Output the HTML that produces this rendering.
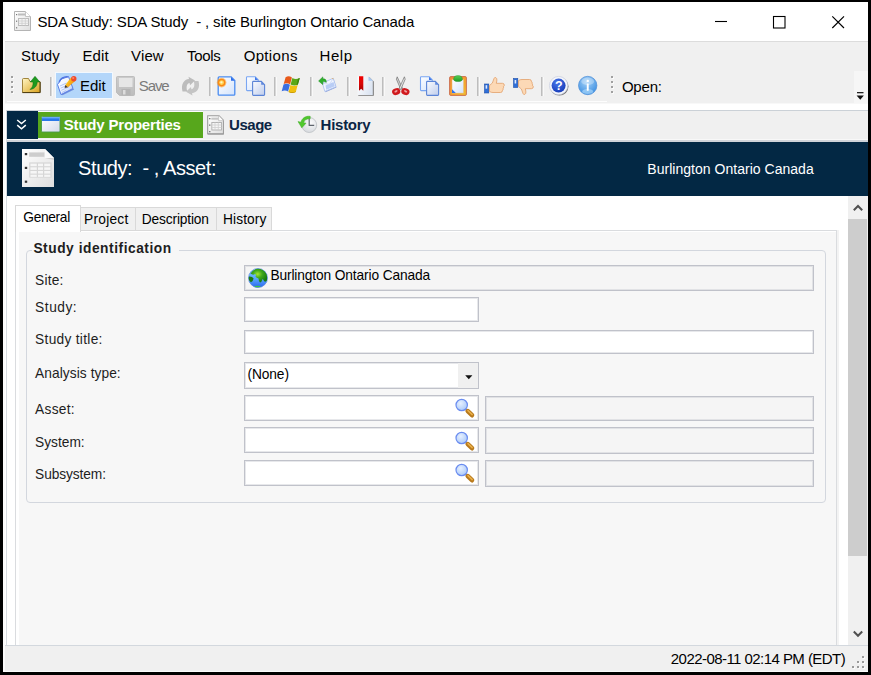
<!DOCTYPE html>
<html lang="en"><head><meta charset="utf-8"><title>SDA Study</title>
<style>
html,body{margin:0;padding:0;}
body{width:871px;height:675px;background:#000;overflow:hidden;position:relative;font-family:"Liberation Sans",sans-serif;}
#root{position:absolute;left:0;top:0;width:871px;height:675px;overflow:hidden;}
.b{position:absolute;box-sizing:border-box;}
.t{position:absolute;white-space:pre;height:20px;line-height:20px;font-family:"Liberation Sans",sans-serif;}
svg{position:absolute;overflow:visible;}
.inp{position:absolute;box-sizing:border-box;border:1px solid #c0c2ca;background:#fff;box-shadow:inset 0 0 0 1px rgba(192,194,202,0.38);}
.dis{background:#f5f5f5;}
.sep{position:absolute;width:2px;background:linear-gradient(90deg,#bdbdbd 0,#bdbdbd 50%,#d8d8d8 50%,#d8d8d8 100%);top:77px;height:19px;box-shadow:1px 0 0 #f9f9f9;}

.gd{position:absolute;width:2px;height:2px;background:#a0a0a0;box-shadow:1px 1px 0 #fbfbfb;}
</style></head><body><div id="root">
<!-- window -->
<div class="b" style="left:3px;top:2px;width:865px;height:670px;background:#fff;"></div>
<!-- title bar bottom line -->
<div class="b" style="left:3px;top:41px;width:865px;height:1px;background:#dcdcdc;"></div>
<!-- menu + toolbar -->
<div class="b" style="left:3px;top:42px;width:865px;height:61px;background:#f0f0f0;"></div>
<div class="b" style="left:3px;top:103px;width:865px;height:1px;background:#f8f8f8;"></div>
<div class="b" style="left:7px;top:101px;width:600px;height:1px;background:#fdfdfd;"></div>
<div class="b" style="left:854px;top:71px;width:14px;height:32px;background:#f6f6f6;"></div>
<!-- container lines -->
<div class="b" style="left:6px;top:110px;width:862px;height:1px;background:#cbd1d7;"></div>
<div class="b" style="left:6px;top:110px;width:1px;height:535px;background:#d7dbe0;"></div>
<!-- strip -->
<div class="b" style="left:7px;top:111px;width:861px;height:28px;background:#f0f0f0;"></div>
<div class="b" style="left:7px;top:139px;width:861px;height:1px;background:#f8f8f8;"></div>
<div class="b" style="left:7px;top:140px;width:861px;height:2px;background:#d0d4d9;"></div>
<div class="b" style="left:38px;top:111px;width:165px;height:1px;background:#fcfcfc;"></div>
<div class="b" style="left:7px;top:111px;width:31px;height:28px;background:#032844;"></div>
<div class="b" style="left:38px;top:112px;width:165px;height:26px;background:#57a71c;"></div>
<!-- header -->
<div class="b" style="left:7px;top:142px;width:861px;height:54px;background:#032844;"></div>
<!-- scrollbar -->
<div class="b" style="left:848px;top:196px;width:20px;height:449px;background:#f0f0f0;"></div>
<div class="b" style="left:848px;top:219px;width:19px;height:337px;background:#cdcdcd;"></div>
<!-- tab control -->
<div class="b" style="left:15px;top:230px;width:822px;height:420px;border:1px solid #dadcdf;background:#fff;"></div>
<div class="b" style="left:837px;top:230px;width:2px;height:415px;background:#f3f3f3;"></div>
<div class="b" style="left:19px;top:232px;width:817px;height:413px;background:#f7f7f7;"></div>
<div class="b" style="left:80px;top:207px;width:192px;height:24px;border:1px solid #d9d9d9;background:#f0f0f0;"></div>
<div class="b" style="left:135px;top:208px;width:1px;height:22px;background:#d9d9d9;"></div>
<div class="b" style="left:216px;top:208px;width:1px;height:22px;background:#d9d9d9;"></div>
<div class="b" style="left:15px;top:205px;width:66px;height:27px;border:1px solid #d9d9d9;border-bottom:none;background:#fff;"></div>
<!-- group box -->
<div class="b" style="left:26px;top:250px;width:800px;height:253px;border:1px solid #d3d7de;border-radius:4px;"></div>
<div class="b" style="left:32px;top:249px;width:147px;height:3px;background:#f7f7f7;"></div>
<!-- inputs -->
<div class="inp dis" style="left:244px;top:265px;width:570px;height:26px;"></div>
<div class="inp" style="left:244px;top:297px;width:235px;height:25px;"></div>
<div class="inp" style="left:244px;top:330px;width:570px;height:24px;"></div>
<div class="inp" style="left:244px;top:362px;width:235px;height:27px;"></div>
<div class="b" style="left:458px;top:363px;width:20px;height:25px;background:#f0f0f0;"></div>
<div class="inp" style="left:244px;top:395px;width:235px;height:26px;"></div>
<div class="inp dis" style="left:485px;top:396px;width:329px;height:25px;"></div>
<div class="inp" style="left:244px;top:427px;width:235px;height:26px;"></div>
<div class="inp dis" style="left:485px;top:427px;width:329px;height:27px;"></div>
<div class="inp" style="left:244px;top:460px;width:235px;height:26px;"></div>
<div class="inp dis" style="left:485px;top:460px;width:329px;height:27px;"></div>
<!-- status bar -->
<div class="b" style="left:3px;top:645px;width:865px;height:1px;background:#d3d8de;"></div>
<div class="b" style="left:3px;top:646px;width:865px;height:26px;background:#f0f0f0;"></div>
<!-- inner window border -->
<div class="b" style="left:3px;top:2px;width:2px;height:670px;background:#fbfbfb;"></div>
<div class="b" style="left:3px;top:671px;width:865px;height:1px;background:#fbfbfb;"></div>

<!-- ===== icons ===== -->
<svg width="0" height="0" style="left:0;top:0"><defs>
<linearGradient id="gPage" x1="0" y1="0" x2="1" y2="1"><stop offset="0" stop-color="#ffffff"/><stop offset="1" stop-color="#dedede"/></linearGradient>
<linearGradient id="gFold" x1="0" y1="0" x2="1" y2="1"><stop offset="0" stop-color="#fff6c4"/><stop offset="1" stop-color="#d9a11c"/></linearGradient>
<linearGradient id="gBlueDoc" x1="0" y1="0" x2="1" y2="1"><stop offset="0" stop-color="#ffffff"/><stop offset="1" stop-color="#dfe9fb"/></linearGradient>
<radialGradient id="gLens" cx="0.4" cy="0.35" r="0.7"><stop offset="0" stop-color="#e6f0ff"/><stop offset="1" stop-color="#a9c8f8"/></radialGradient>
<radialGradient id="gHelp" cx="0.4" cy="0.3" r="0.8"><stop offset="0" stop-color="#4a78ea"/><stop offset="1" stop-color="#1236b4"/></radialGradient>
<radialGradient id="gInfo" cx="0.45" cy="0.3" r="0.8"><stop offset="0" stop-color="#a5d2f8"/><stop offset="1" stop-color="#2f86de"/></radialGradient>
<radialGradient id="gGlobe" cx="0.4" cy="0.35" r="0.75"><stop offset="0" stop-color="#62adf3"/><stop offset="1" stop-color="#0f4db8"/></radialGradient>
<linearGradient id="gWin" x1="0" y1="0" x2="1" y2="1"><stop offset="0" stop-color="#ffffff"/><stop offset="1" stop-color="#d5d9ea"/></linearGradient>
<linearGradient id="gDisk" x1="0" y1="0" x2="0" y2="1"><stop offset="0" stop-color="#cccccc"/><stop offset="1" stop-color="#bdbdbd"/></linearGradient>
<linearGradient id="gBlueDoc2" x1="0" y1="0" x2="1" y2="1"><stop offset="0" stop-color="#ffffff"/><stop offset="1" stop-color="#d3e3fc"/></linearGradient>
<linearGradient id="gBlueDoc3" x1="0" y1="0" x2="1" y2="1"><stop offset="0" stop-color="#fafbfe"/><stop offset="1" stop-color="#bfcdec"/></linearGradient>
<linearGradient id="gNote" x1="0" y1="0" x2="1" y2="1"><stop offset="0" stop-color="#ffffff"/><stop offset="0.55" stop-color="#eef3fe"/><stop offset="1" stop-color="#9db6f2"/></linearGradient>
<linearGradient id="gPencil" x1="0" y1="0" x2="1" y2="0.6"><stop offset="0" stop-color="#ffe02a"/><stop offset="1" stop-color="#f28c10"/></linearGradient>
<radialGradient id="gClock" cx="0.6" cy="0.35" r="0.8"><stop offset="0" stop-color="#fbfbfc"/><stop offset="1" stop-color="#cfd3d8"/></radialGradient>
<linearGradient id="gBk" x1="0" y1="0" x2="1" y2="0.4"><stop offset="0" stop-color="#ffffff"/><stop offset="1" stop-color="#dde5f2"/></linearGradient>
<linearGradient id="gRib" x1="0" y1="0" x2="0" y2="1"><stop offset="0" stop-color="#f00000"/><stop offset="0.5" stop-color="#d80808"/><stop offset="1" stop-color="#a80000"/></linearGradient>
<linearGradient id="gClip" x1="0" y1="0" x2="1" y2="1"><stop offset="0" stop-color="#f08a3a"/><stop offset="0.5" stop-color="#f5a030"/><stop offset="1" stop-color="#f0c030"/></linearGradient>
<linearGradient id="gGreen" x1="0" y1="0" x2="0" y2="1"><stop offset="0" stop-color="#58d058"/><stop offset="1" stop-color="#1f9a22"/></linearGradient>
<linearGradient id="gOcean" x1="0" y1="0" x2="0" y2="1"><stop offset="0" stop-color="#7cc4ff"/><stop offset="0.55" stop-color="#58a6fb"/><stop offset="1" stop-color="#2a66f0"/></linearGradient>
<radialGradient id="gLand" cx="0.42" cy="0.4" r="0.6"><stop offset="0" stop-color="#a4e630"/><stop offset="0.45" stop-color="#3fa81c"/><stop offset="1" stop-color="#157a10"/></radialGradient>
</defs></svg>

<!-- title icon -->
<svg style="left:14px;top:11px" width="17" height="20" viewBox="0 0 17 20">
<path d="M0.5,0.5H11.5L16.5,5.5V19.5H0.5Z" fill="url(#gPage)" stroke="#b4b4b4"/>
<path d="M11.5,0.5V5.5H16.5" fill="#fff" stroke="#c4c4c4"/>
<rect x="4" y="2.5" width="7" height="2" fill="#bdbdbd"/>
<rect x="4.5" y="7.5" width="10" height="7" fill="#f4f4f4" stroke="#bcbcbc"/>
<path d="M8,7.5V14.5M11.3,7.5V14.5M4.5,10H14.5M4.5,12.3H14.5" stroke="#cdcdcd" stroke-width="0.8" fill="none"/>
<rect x="2" y="3" width="1.2" height="1.2" fill="#777"/><rect x="2" y="9.6" width="1.2" height="1.2" fill="#777"/><rect x="2" y="16.2" width="1.2" height="1.2" fill="#777"/>
</svg>

<!-- window controls -->
<svg style="left:715px;top:14px" width="132" height="16" viewBox="715 14 132 16">
<path d="M715,21.5H727" stroke="#000" stroke-width="1.1"/>
<rect x="773.5" y="16.5" width="11.5" height="11.5" fill="none" stroke="#000" stroke-width="1.1"/>
<path d="M832.3,16.3L844,28M844,16.3L832.3,28" stroke="#000" stroke-width="1.15"/>
</svg>

<!-- toolbar grips -->
<div class="gd" style="left:11px;top:76px"></div><div class="gd" style="left:11px;top:81px"></div><div class="gd" style="left:11px;top:86px"></div><div class="gd" style="left:11px;top:91px"></div>
<div class="gd" style="left:611px;top:76px"></div><div class="gd" style="left:611px;top:81px"></div><div class="gd" style="left:611px;top:86px"></div><div class="gd" style="left:611px;top:91px"></div>

<!-- separators -->
<div class="sep" style="left:50px"></div><div class="sep" style="left:209px"></div><div class="sep" style="left:274px"></div><div class="sep" style="left:310px"></div><div class="sep" style="left:347px"></div><div class="sep" style="left:382px"></div><div class="sep" style="left:477px"></div><div class="sep" style="left:541px"></div>

<!-- edit button highlight -->
<div class="b" style="left:55px;top:72px;width:58px;height:27px;background:#b3d6fa;border:1px solid #f2f8fe;"></div>

<!-- folder up -->
<svg style="left:22px;top:76px" width="19" height="18" viewBox="0 0 19 18">
<path d="M0.5,3.5Q0.5,2.5 1.5,2.5H6.5L8,5.5H18V16.5H0.5Z" fill="url(#gFold)" stroke="#8a6a18" stroke-width="0.8"/>
<path d="M0.5,16.6H18.2V6" stroke="#4a3a10" stroke-width="1" fill="none"/>
<path d="M13,0.3L17.8,6H15.2C15.2,10 12.5,13 8,13.5C10.5,11.5 11.3,9 11,6H8.3Z" fill="#1e9a1e" stroke="#0d6e12" stroke-width="0.5"/>
</svg>

<!-- edit (notepad+pencil) -->
<svg style="left:56px;top:75px" width="21" height="21" viewBox="0 0 21 21">
<path d="M6.5,20.3L18.2,14.6L17,13.5L5,19Z" fill="#6f8fdc"/>
<path d="M1.5,9.5L5.5,4L12.5,1.6L17,13.5L5,19.6Z" fill="url(#gNote)" stroke="#5a7ee6" stroke-width="1"/>
<path d="M3.2,7.2Q4.3,3.4 8.3,2.2Q10.5,1.3 12.3,2" stroke="#4f74e2" stroke-width="1.3" fill="none"/>
<path d="M4,11L10.5,8M4.6,13.2L12,9.8M5.2,15.4L13.2,11.7M5.8,17.5L10,15.6" stroke="#a9c0f4" stroke-width="0.9"/>
<path d="M9.3,10L15,2.6L19.2,5.9L12,12.3Z" fill="url(#gPencil)"/>
<circle cx="17.8" cy="3.7" r="2.7" fill="#f04a2c"/><circle cx="17.2" cy="3" r="1.1" fill="#f98a6a"/>
<path d="M9.3,10L12,12.3L8.6,12.9Z" fill="#4a3a2a"/>
</svg>

<!-- save (disabled) -->
<svg style="left:116px;top:76px" width="19" height="20" viewBox="0 0 19 20">
<path d="M0.5,1.5Q0.5,0.5 1.5,0.5H17.5Q18.5,0.5 18.5,1.5V18.5Q18.5,19.5 17.5,19.5H3.5L0.5,16.5Z" fill="url(#gDisk)" stroke="#b5b5b5" stroke-width="0.8"/>
<rect x="3" y="2" width="13.5" height="9" fill="#e6e6e6"/>
<rect x="5.5" y="13" width="9" height="6.5" fill="#b4b4b4"/>
<rect x="7" y="14" width="2.5" height="4.5" fill="#dcdcdc"/>
</svg>

<!-- refresh (disabled) -->
<svg style="left:181px;top:76px" width="19" height="20" viewBox="0 0 19 20">
<path d="M1.5,15.5C-0.5,8 3,3.5 8,3L7.5,0.8L14,4.5L9,9.3L8.6,7C6,7.5 4.8,10.5 6.3,15.5Z" fill="#bcbcbc"/>
<path d="M17.5,5C19.5,12 16,16.5 11,17.2L11.5,19.4L5,15.7L10,10.9L10.4,13.2C13,12.7 14.2,9.7 12.7,5Z" fill="#c4c4c4"/>
</svg>

<!-- new doc -->
<svg style="left:217px;top:76px" width="19" height="20" viewBox="0 0 19 20">
<path d="M2.2,0.9H14.2L17.8,4.5V18.2Q17.8,19.2 16.8,19.2H2.2Q1.2,19.2 1.2,18.2V1.9Q1.2,0.9 2.2,0.9Z" fill="url(#gBlueDoc2)" stroke="#4a8cf0" stroke-width="1.3"/>
<path d="M14,1V4.7H17.7Z" fill="#2f6ee8"/>
<circle cx="4.6" cy="6.6" r="4.8" fill="#ff9a1e" opacity="0.55"/><circle cx="4.6" cy="6.6" r="3.8" fill="#fb8a14"/><circle cx="4.6" cy="6.6" r="2.4" fill="#ffd75a"/><circle cx="4.4" cy="6.3" r="1.1" fill="#fff6cc"/>
</svg>

<!-- copy 1 -->
<svg style="left:246px;top:76px" width="20" height="20" viewBox="0 0 20 20">
<path d="M1.2,0.7H9.2L12.2,3.7V14.6H1.2Q0.5,14.6 0.5,13.8V1.5Q0.5,0.7 1.2,0.7Z" fill="url(#gBlueDoc2)" stroke="#7aa6f2" stroke-width="1.1"/>
<path d="M9,0.8V3.9H12.1Z" fill="#3f78e8"/>
<path d="M7.4,5.4H15.3L18.6,8.7V18.6Q18.6,19.4 17.8,19.4H7.4Q6.6,19.4 6.6,18.6V6.2Q6.6,5.4 7.4,5.4Z" fill="url(#gBlueDoc3)" stroke="#5b84d6" stroke-width="1.1"/>
<path d="M15.2,5.6V8.8H18.5Z" fill="#5c86dc"/>
</svg>

<!-- windows flag -->
<svg style="left:282px;top:76px" width="19" height="18" viewBox="0 0 19 18">
<path d="M3.6,1.3Q6.6,-0.8 9.9,1.6L8.1,8.3Q5,6.2 1.7,8.1Z" fill="#e8591a"/>
<path d="M10.4,1.9Q13.6,4 17.8,1.9L15.9,8.6Q12.4,10.6 8.6,8.5Z" fill="#5aa818"/>
<path d="M15.9,2.7L17.8,1.9L15.9,8.6L14.6,9.2Z" fill="#3d8510"/>
<path d="M1.5,8.6Q4.7,6.7 7.9,8.8L6.1,15.6Q3,13.5 -0.3,15.3Z" fill="#3a6fe0"/>
<path d="M8.4,9.1Q11.9,11 15.7,9.1L13.8,16Q10.2,18 6.6,16Z" fill="#f0c010"/>
<path d="M6.6,16Q10.2,18 13.8,16L14,15.2Q10.3,17 6.8,15.2Z" fill="#c99a08"/>
</svg>

<!-- envelope w/ green arrow -->
<svg style="left:318px;top:76px" width="20" height="18" viewBox="0 0 20 18">
<path d="M5.2,8.2L15.6,2.9L18.4,11.6L7.4,16.3Z" fill="#8d9fd6"/>
<path d="M4.4,7.2L15.2,2.2L18,10.8L6.8,15.4Z" fill="#f2f6fe" stroke="#a9c0f0" stroke-width="0.8"/>
<path d="M7.5,9.5L15.5,6L16.8,10.3L8.3,13.7Z" fill="#b9cdf5"/>
<path d="M4.4,7.2L11.6,8.4L15.2,2.2" fill="none" stroke="#c7d6f6" stroke-width="0.8"/>
<path d="M13.5,2.6L15.2,2.2L15.5,3.3Z" fill="#f0a030"/>
<path d="M0.6,5L4.8,0.9V2.9C7.4,2.6 8.6,4 8.2,6.6C7.3,5.5 6.2,5.3 4.8,5.8V8.6Z" fill="#2fb02c" stroke="#178a1c" stroke-width="0.5"/>
</svg>

<!-- bookmark page -->
<svg style="left:357px;top:76px" width="17" height="20" viewBox="0 0 17 20">
<path d="M1.3,1H12.4L16.8,5.4V19.8H1.3Z" fill="#555" opacity="0.8"/>
<path d="M0.6,0.5H11.5L15.8,4.8V19H0.6Z" fill="url(#gBk)"/>
<path d="M11.5,0.5V4.8H15.8Z" fill="#a9c8f0"/>
<path d="M2,0.3H6.3V14.8L4.15,12.7L2,14.8Z" fill="url(#gRib)"/>
</svg>

<!-- scissors -->
<svg style="left:391px;top:76px" width="19" height="20" viewBox="0 0 19 20">
<path d="M6.2,0.8L11.6,12.6L9.8,13.4L5.4,3.2Z" fill="#d2d2d2" stroke="#707070" stroke-width="0.7"/>
<path d="M13.4,0.8L8,12.6L9.8,13.4L14.2,3.2Z" fill="#e6e6e6" stroke="#707070" stroke-width="0.7"/>
<ellipse cx="5.2" cy="15.6" rx="4.2" ry="3.3" fill="#d01a1e" transform="rotate(-20 5.2 15.6)"/>
<ellipse cx="14.4" cy="15.6" rx="4.2" ry="3.3" fill="#d01a1e" transform="rotate(20 14.4 15.6)"/>
<ellipse cx="5" cy="15.3" rx="1.7" ry="1" fill="#f0a0a0" transform="rotate(-25 5 15.3)"/>
<ellipse cx="14.6" cy="15.3" rx="1.7" ry="1" fill="#f0a0a0" transform="rotate(25 14.6 15.3)"/>
</svg>

<!-- copy 2 -->
<svg style="left:419.6px;top:76px" width="20" height="20" viewBox="0 0 20 20">
<path d="M1.2,0.7H9.2L12.2,3.7V14.6H1.2Q0.5,14.6 0.5,13.8V1.5Q0.5,0.7 1.2,0.7Z" fill="url(#gBlueDoc2)" stroke="#7aa6f2" stroke-width="1.1"/>
<path d="M9,0.8V3.9H12.1Z" fill="#3f78e8"/>
<path d="M7.4,5.4H15.3L18.6,8.7V18.6Q18.6,19.4 17.8,19.4H7.4Q6.6,19.4 6.6,18.6V6.2Q6.6,5.4 7.4,5.4Z" fill="url(#gBlueDoc3)" stroke="#5b84d6" stroke-width="1.1"/>
<path d="M15.2,5.6V8.8H18.5Z" fill="#5c86dc"/>
</svg>

<!-- paste -->
<svg style="left:449px;top:75px" width="18" height="21" viewBox="0 0 18 21">
<rect x="0.6" y="1.6" width="16.8" height="18.8" rx="1.2" fill="url(#gClip)" stroke="#c8684a" stroke-width="0.9"/>
<rect x="3" y="4.5" width="11.6" height="13.6" fill="url(#gBlueDoc2)" stroke="#e8b868" stroke-width="0.5"/>
<path d="M3,14.2L6.8,18.1H3Z" fill="#2f74ee"/>
<path d="M4.6,4.6Q4.4,0.6 9,0.6Q13.6,0.6 13.4,4.6Q13.2,6.6 9,6.6Q4.8,6.6 4.6,4.6Z" fill="url(#gGreen)" stroke="#1f8a22" stroke-width="0.4"/>
</svg>

<!-- thumb up -->
<svg style="left:484px;top:77px" width="21" height="17" viewBox="0 0 21 17">
<rect x="0.5" y="7" width="4.3" height="9" fill="#2f6fd8" stroke="#1f4fa8" stroke-width="0.6"/>
<rect x="1.6" y="8.2" width="1.6" height="3.5" fill="#dfeaff"/>
<path d="M5.5,8.5Q9,7 10,1.5Q10.3,0.3 11.8,0.6Q13.3,1.2 12.8,4L12.3,6.3H18.5Q20.5,6.5 20.3,8.3Q20.3,9.3 19.3,9.7Q20,10.8 19,11.8Q19.5,13 18.3,13.8Q18.5,15.5 16.5,15.5H9Q7,15.5 5.5,14.5Z" fill="#fcd9b6" stroke="#e2a06a" stroke-width="0.8"/>
</svg>

<!-- thumb down -->
<svg style="left:513px;top:78px" width="21" height="17" viewBox="0 0 21 17">
<g transform="translate(0,17) scale(1,-1)">
<rect x="0.5" y="7.5" width="4.3" height="9" fill="#2f6fd8" stroke="#1f4fa8" stroke-width="0.6"/>
<rect x="1.6" y="11.5" width="1.6" height="3.5" fill="#dfeaff"/>
<path d="M5.5,8.5Q9,7 10,1.5Q10.3,0.3 11.8,0.6Q13.3,1.2 12.8,4L12.3,6.3H18.5Q20.5,6.5 20.3,8.3Q20.3,9.3 19.3,9.7Q20,10.8 19,11.8Q19.5,13 18.3,13.8Q18.5,15.5 16.5,15.5H9Q7,15.5 5.5,14.5Z" fill="#fcd9b6" stroke="#e2a06a" stroke-width="0.8"/>
</g>
</svg>

<!-- help -->
<svg style="left:549px;top:76px" width="20" height="20" viewBox="0 0 20 20">
<circle cx="10.3" cy="10.4" r="9.2" fill="#4a4a4a" opacity="0.75"/>
<circle cx="9.6" cy="9.6" r="9.2" fill="#f3f5fb" stroke="#c9cee0" stroke-width="0.7"/>
<circle cx="9.6" cy="9.6" r="7" fill="url(#gHelp)"/>
<text x="9.7" y="14" font-family="Liberation Sans, sans-serif" font-size="12.5" font-weight="700" fill="#fff" text-anchor="middle">?</text>
</svg>

<!-- info -->
<svg style="left:578px;top:76px" width="20" height="20" viewBox="0 0 20 20">
<circle cx="9.7" cy="9.5" r="9.2" fill="url(#gInfo)" stroke="#4f8fd8" stroke-width="0.7"/>
<ellipse cx="9.7" cy="5.4" rx="6.4" ry="3.8" fill="#ffffff" opacity="0.3"/>
<ellipse cx="9.7" cy="15.5" rx="5.5" ry="2.5" fill="#bfe6ff" opacity="0.55"/>
<rect x="8.8" y="7.4" width="1.9" height="7.4" rx="0.6" fill="#fff"/><circle cx="9.75" cy="4.9" r="1.2" fill="#fff"/>
</svg>

<!-- overflow arrow -->
<svg style="left:856px;top:91px" width="9" height="10" viewBox="0 0 9 10">
<rect x="1" y="1" width="6.5" height="1.3" fill="#222"/>
<path d="M0.6,4.5H7.9L4.25,8.8Z" fill="#111"/>
</svg>

<!-- chevrons in strip -->
<svg style="left:16px;top:119px" width="11" height="12" viewBox="0 0 11 12">
<path d="M1.2,1L5.5,4.6L9.8,1M1.2,6.2L5.5,9.8L9.8,6.2" fill="none" stroke="#fff" stroke-width="1.5"/>
</svg>

<!-- strip: window icon -->
<svg style="left:41px;top:116px" width="20" height="17" viewBox="0 0 20 17">
<rect x="0.5" y="0.5" width="18.5" height="15.5" rx="1" fill="url(#gWin)" stroke="#4a9a4a" stroke-width="0.9"/>
<rect x="1" y="1" width="17.5" height="4" fill="#2a78ea"/>
<rect x="1" y="1" width="17.5" height="1.4" fill="#6aaaf7"/>
</svg>

<!-- strip: usage icon -->
<svg style="left:207px;top:115px" width="17.4" height="20" viewBox="0 0 18 20" preserveAspectRatio="none">
<path d="M0.7,0.7H12.5L17,5.2V18.8H0.7Z" fill="url(#gPage)" stroke="#9a9a9a" stroke-width="1.1"/>
<path d="M12,0.7V5.7H17" fill="#fdfdfd" stroke="#bdbdbd" stroke-width="0.8"/>
<rect x="4.5" y="2.7" width="7" height="2" fill="#c6c6c6"/>
<rect x="5" y="7.5" width="10" height="7.5" fill="#f6f6f6" stroke="#adadad" stroke-width="0.9"/>
<path d="M8.3,7.5V15M11.7,7.5V15M5,10H15M5,12.5H15" stroke="#cfcfcf" stroke-width="0.8" fill="none"/>
<rect x="2.2" y="3" width="1.3" height="1.3" fill="#666"/><rect x="2.2" y="9.5" width="1.3" height="1.3" fill="#666"/><rect x="2.2" y="16" width="1.3" height="1.3" fill="#666"/>
<path d="M0.7,19.2H17.3" stroke="#9a9a9a" stroke-width="1"/>
</svg>

<!-- strip: history clock -->
<svg style="left:297px;top:115px" width="21" height="20" viewBox="0 0 21 20">
<circle cx="12.2" cy="10" r="7.5" fill="url(#gClock)" stroke="#bcc0c4" stroke-width="0.8"/>
<path d="M12.2,3.6V10.3H17.2" fill="none" stroke="#5f666e" stroke-width="1.2"/>
<path d="M13.2,1.3C8.2,0.6 4.7,3.6 4,7.2L1,6.6L4.8,12.8L9,8.2L6.5,7.7C7.2,5.2 9.7,3.5 13.2,3.8Z" fill="#4fc82c" stroke="#38a81e" stroke-width="0.5"/>
</svg>

<!-- header icon -->
<svg style="left:22px;top:149px" width="32" height="38" viewBox="0 0 32 38">
<path d="M0,0H23L32,9V38H0Z" fill="url(#gPage)"/>
<path d="M23,0V9H32Z" fill="#fafafa"/>
<path d="M23,9H32V11L23,9Z" fill="#cfcfcf"/>
<rect x="7.2" y="3.4" width="15.2" height="4.4" fill="#cdcdcd"/>
<rect x="7.2" y="13.4" width="22.4" height="15.2" fill="#d6d6d6"/>
<g fill="#f6f6f6"><rect x="8.4" y="14.6" width="6.4" height="2.6"/><rect x="16" y="14.6" width="5" height="2.6"/><rect x="22.2" y="14.6" width="6.2" height="2.6"/>
<rect x="8.4" y="18.3" width="6.4" height="2.6"/><rect x="16" y="18.3" width="5" height="2.6"/><rect x="22.2" y="18.3" width="6.2" height="2.6"/>
<rect x="8.4" y="22" width="6.4" height="2.6"/><rect x="16" y="22" width="5" height="2.6"/><rect x="22.2" y="22" width="6.2" height="2.6"/>
<rect x="8.4" y="25.7" width="6.4" height="2.2"/><rect x="16" y="25.7" width="5" height="2.2"/><rect x="22.2" y="25.7" width="6.2" height="2.2"/></g>
<rect x="2.8" y="4" width="2.4" height="2.2" fill="#333"/><rect x="2.8" y="17.8" width="2.4" height="2.2" fill="#333"/><rect x="2.8" y="31.6" width="2.4" height="2.2" fill="#333"/>
</svg>

<!-- scrollbar arrows -->
<svg style="left:853px;top:204px" width="10" height="8" viewBox="0 0 10 8"><path d="M0.8,6.3L5,2L9.2,6.3" fill="none" stroke="#505050" stroke-width="2"/></svg>
<svg style="left:853px;top:630px" width="10" height="8" viewBox="0 0 10 8"><path d="M0.8,1.5L5,5.8L9.2,1.5" fill="none" stroke="#505050" stroke-width="2"/></svg>

<!-- globe -->
<svg style="left:248px;top:268px" width="20" height="20" viewBox="0 0 20 20">
<clipPath id="cGlobe"><circle cx="10" cy="10" r="9.4"/></clipPath>
<circle cx="10" cy="10" r="9.5" fill="url(#gOcean)" stroke="#5a86dc" stroke-width="0.7"/>
<g clip-path="url(#cGlobe)">
<path d="M2.5,5.5Q5,1.5 10,0.5Q16,0.5 19.5,7L19,12.5Q17.5,14.5 16,13Q15.5,11.5 14.5,11Q13.5,14.5 12,14.5Q10.5,12.5 10.5,10.5Q8.5,10 7.5,8.5Q8.5,6.5 7,6Q5,7.5 2.5,5.5Z" fill="url(#gLand)"/>
<path d="M0.5,8.6Q4.3,8.3 5.6,10.5Q5.2,13.2 3,14.2Q1,12.8 0.3,10.5Z" fill="#1c7a10"/>
<ellipse cx="9.5" cy="18.6" rx="3.2" ry="0.9" fill="#3cc04a"/>
</g>
</svg>

<!-- dropdown arrow -->
<svg style="left:465px;top:375px" width="8" height="5" viewBox="0 0 8 5"><path d="M0.2,0.2H7.4L3.8,4.2Z" fill="#111"/></svg>

<!-- magnifiers -->
<svg style="left:455px;top:398px" width="21" height="21" viewBox="0 0 21 21"><path d="M10.6,11L12.4,12.8" stroke="#9a9aa0" stroke-width="2.2"/><path d="M12.8,13.2L17,17.2" stroke="#b8791c" stroke-width="4.6" stroke-linecap="round"/><path d="M13,12.6L17.2,16.6" stroke="#e9b04a" stroke-width="1.5" stroke-linecap="round"/><circle cx="6.7" cy="7" r="5.7" fill="url(#gLens)" stroke="#6a8cf0" stroke-width="1.2"/></svg>
<svg style="left:455px;top:431px" width="21" height="21" viewBox="0 0 21 21"><path d="M10.6,11L12.4,12.8" stroke="#9a9aa0" stroke-width="2.2"/><path d="M12.8,13.2L17,17.2" stroke="#b8791c" stroke-width="4.6" stroke-linecap="round"/><path d="M13,12.6L17.2,16.6" stroke="#e9b04a" stroke-width="1.5" stroke-linecap="round"/><circle cx="6.7" cy="7" r="5.7" fill="url(#gLens)" stroke="#6a8cf0" stroke-width="1.2"/></svg>
<svg style="left:455px;top:463px" width="21" height="21" viewBox="0 0 21 21"><path d="M10.6,11L12.4,12.8" stroke="#9a9aa0" stroke-width="2.2"/><path d="M12.8,13.2L17,17.2" stroke="#b8791c" stroke-width="4.6" stroke-linecap="round"/><path d="M13,12.6L17.2,16.6" stroke="#e9b04a" stroke-width="1.5" stroke-linecap="round"/><circle cx="6.7" cy="7" r="5.7" fill="url(#gLens)" stroke="#6a8cf0" stroke-width="1.2"/></svg>

<!-- size grip -->
<div class="gd" style="left:862px;top:656px;background:#9a9a9a"></div>
<div class="gd" style="left:857px;top:661px;background:#9a9a9a"></div><div class="gd" style="left:862px;top:661px;background:#9a9a9a"></div>
<div class="gd" style="left:852px;top:666px;background:#9a9a9a"></div><div class="gd" style="left:857px;top:666px;background:#9a9a9a"></div><div class="gd" style="left:862px;top:666px;background:#9a9a9a"></div>

<span class="t" id="title" style="left:37.4px;top:11.80px;font-size:15px;font-weight:400;color:#000;letter-spacing:-0.136px;">SDA Study: SDA Study  - , site Burlington Ontario Canada</span>
<span class="t" id="m1" style="left:21.1px;top:45.80px;font-size:15px;font-weight:400;color:#000;letter-spacing:0.060px;">Study</span>
<span class="t" id="m2" style="left:82.4px;top:45.80px;font-size:15px;font-weight:400;color:#000;letter-spacing:0.147px;">Edit</span>
<span class="t" id="m3" style="left:131.1px;top:45.80px;font-size:15px;font-weight:400;color:#000;letter-spacing:0.117px;">View</span>
<span class="t" id="m4" style="left:187.0px;top:45.80px;font-size:15px;font-weight:400;color:#000;letter-spacing:-0.333px;">Tools</span>
<span class="t" id="m5" style="left:243.7px;top:45.80px;font-size:15px;font-weight:400;color:#000;letter-spacing:0.333px;">Options</span>
<span class="t" id="m6" style="left:319.5px;top:45.80px;font-size:15px;font-weight:400;color:#000;letter-spacing:0.580px;">Help</span>
<span class="t" id="tbEdit" style="left:80.1px;top:75.80px;font-size:15px;font-weight:400;color:#000;letter-spacing:-0.086px;">Edit</span>
<span class="t" id="tbSave" style="left:138.8px;top:75.80px;font-size:15px;font-weight:400;color:#7a7a7a;letter-spacing:-1.101px;">Save</span>
<span class="t" id="tbOpen" style="left:621.9px;top:76.80px;font-size:15px;font-weight:400;color:#000;letter-spacing:-0.194px;">Open:</span>
<span class="t" id="st1" style="left:63.8px;top:114.80px;font-size:15px;font-weight:700;color:#fff;letter-spacing:-0.195px;">Study Properties</span>
<span class="t" id="st2" style="left:229.1px;top:114.80px;font-size:15px;font-weight:700;color:#0b2545;letter-spacing:-0.483px;">Usage</span>
<span class="t" id="st3" style="left:320.6px;top:114.80px;font-size:15px;font-weight:700;color:#0b2545;letter-spacing:-0.265px;">History</span>
<span class="t" id="hd1" style="left:78.1px;top:158.07px;font-size:20px;font-weight:400;color:#fff;letter-spacing:-0.425px;">Study:  - , Asset:</span>
<span class="t" id="hd2" style="left:647.3px;top:159.15px;font-size:14px;font-weight:400;color:#fff;letter-spacing:0.026px;">Burlington Ontario Canada</span>
<span class="t" id="status" style="left:670.8px;top:648.80px;font-size:15px;font-weight:400;color:#000;letter-spacing:-0.552px;">2022-08-11 02:14 PM (EDT)</span>
<span class="t" id="t1" style="left:23.3px;top:208.24px;font-size:13.75px;font-weight:400;color:#000;letter-spacing:-0.337px;">General</span>
<span class="t" id="t2" style="left:84.1px;top:210.24px;font-size:13.75px;font-weight:400;color:#000;letter-spacing:0.234px;">Project</span>
<span class="t" id="t3" style="left:141.8px;top:210.24px;font-size:13.75px;font-weight:400;color:#000;letter-spacing:-0.158px;">Description</span>
<span class="t" id="t4" style="left:223.1px;top:210.24px;font-size:13.75px;font-weight:400;color:#000;letter-spacing:0.086px;">History</span>
<span class="t" id="gb" style="left:33.4px;top:239.24px;font-size:13.75px;font-weight:700;color:#1e1e1e;letter-spacing:0.538px;">Study identification</span>
<span class="t" id="l1" style="left:35.1px;top:271.24px;font-size:13.75px;font-weight:400;color:#1e1e1e;letter-spacing:0.196px;">Site:</span>
<span class="t" id="l2" style="left:35.1px;top:298.24px;font-size:13.75px;font-weight:400;color:#1e1e1e;letter-spacing:0.523px;">Study:</span>
<span class="t" id="l3" style="left:35.1px;top:330.24px;font-size:13.75px;font-weight:400;color:#1e1e1e;letter-spacing:0.282px;">Study title:</span>
<span class="t" id="l4" style="left:35.1px;top:364.24px;font-size:13.75px;font-weight:400;color:#1e1e1e;letter-spacing:0.058px;">Analysis type:</span>
<span class="t" id="l5" style="left:35.1px;top:400.24px;font-size:13.75px;font-weight:400;color:#1e1e1e;letter-spacing:0.276px;">Asset:</span>
<span class="t" id="l6" style="left:35.1px;top:433.24px;font-size:13.75px;font-weight:400;color:#1e1e1e;letter-spacing:-0.012px;">System:</span>
<span class="t" id="l7" style="left:35.1px;top:465.24px;font-size:13.75px;font-weight:400;color:#1e1e1e;letter-spacing:-0.105px;">Subsystem:</span>
<span class="t" id="v1" style="left:270.4px;top:266.24px;font-size:13.75px;font-weight:400;color:#000;letter-spacing:-0.126px;">Burlington Ontario Canada</span>
<span class="t" id="v2" style="left:247.4px;top:365.24px;font-size:13.75px;font-weight:400;color:#000;letter-spacing:-0.086px;">(None)</span>
</div></body></html>
